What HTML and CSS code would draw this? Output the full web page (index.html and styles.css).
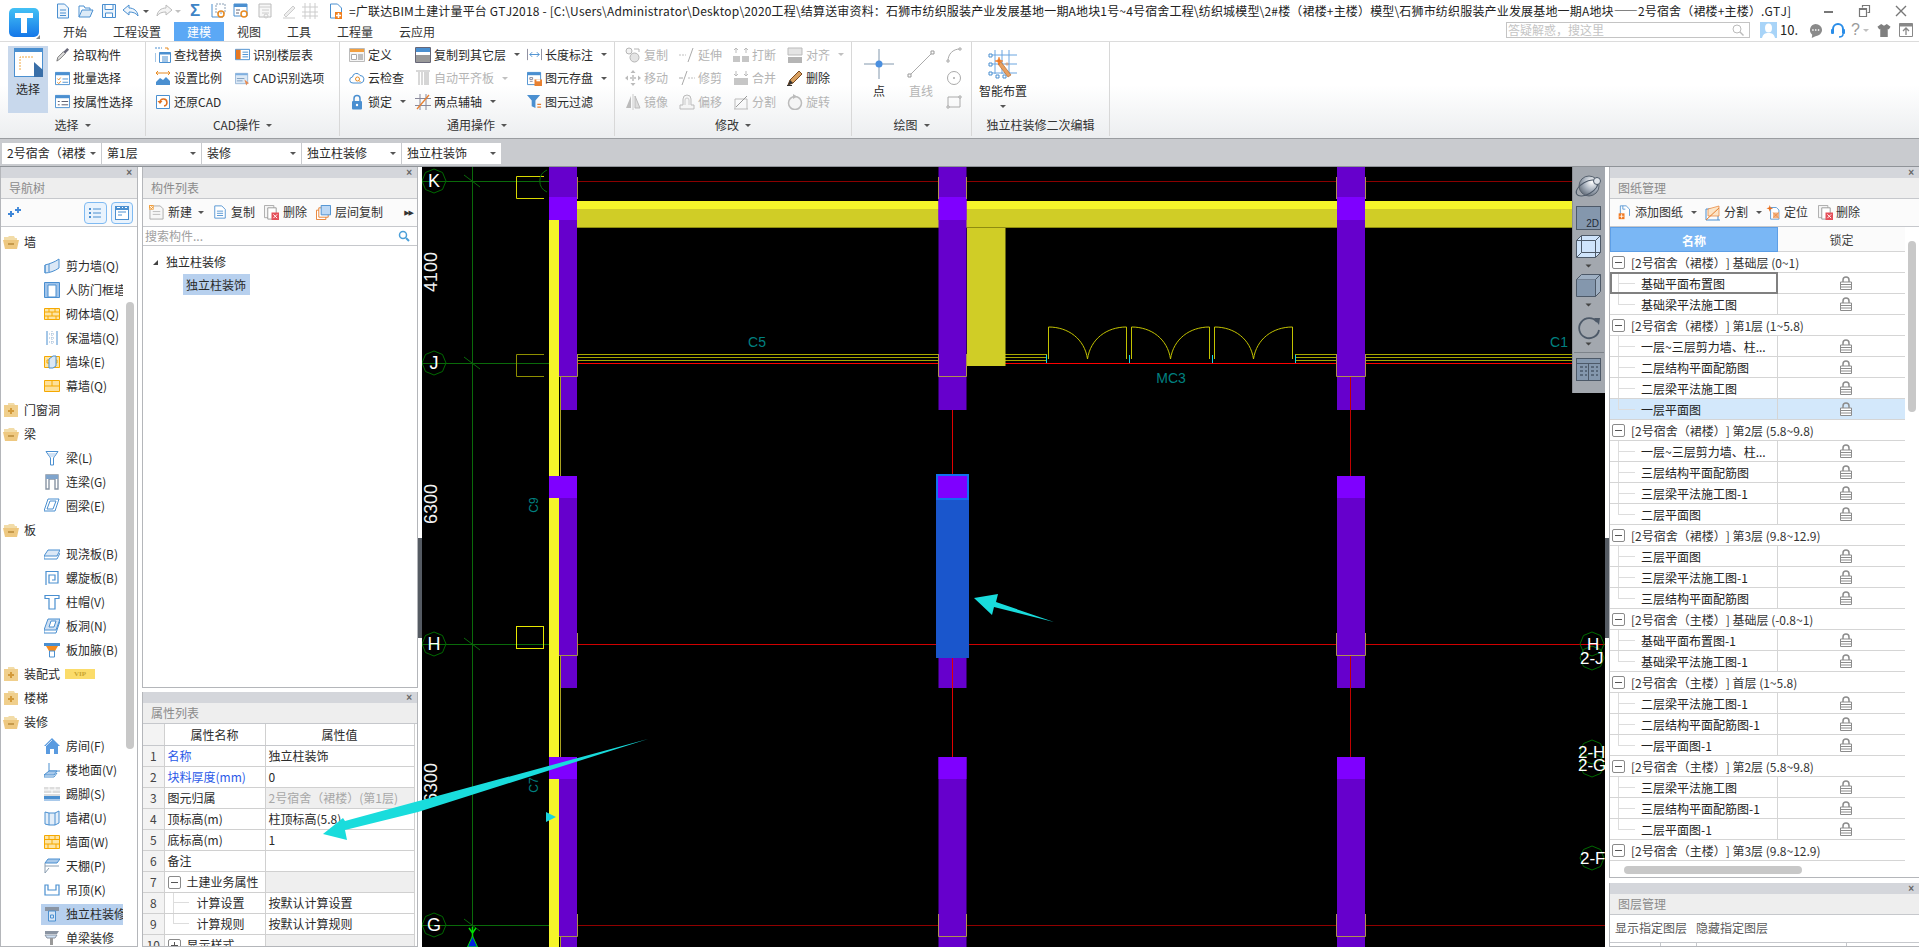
FILE: index.html
```html
<!DOCTYPE html>
<html lang="zh-CN">
<head>
<meta charset="utf-8">
<title>广联达BIM土建计量平台 GTJ2018</title>
<link rel="stylesheet" href="styles.css">
</head>
<body>
<svg class="defs" aria-hidden="true">
<defs>
<symbol id="q-new" viewBox="0 0 16 16"><path d="M2.5 1h7l4 4v10h-11z" fill="#eef5fc" stroke="#4a8fd0"/><path d="M5 7h6M5 10h6M5 12.5h6" stroke="#4a8fd0"/></symbol>
<symbol id="q-open" viewBox="0 0 16 16"><path d="M1 14V3h5l1 2h5v2" fill="none" stroke="#4a8fd0"/><path d="M1 14l3-7h11l-3 7z" fill="#dcebf8" stroke="#4a8fd0"/></symbol>
<symbol id="q-save" viewBox="0 0 16 16"><path d="M1.5 1.5h13v13h-13z" fill="#eef5fc" stroke="#4a8fd0"/><path d="M4 1.5h8v5H4zM4.5 10h7v4.5h-7z" fill="#fff" stroke="#4a8fd0"/></symbol>
<symbol id="q-undo" viewBox="0 0 18 16"><path d="M7 2L1 7l6 5V9c4 0 7 1 9 4-.5-5-4-8-9-8z" fill="#eef5fc" stroke="#4a8fd0"/></symbol>
<symbol id="q-redo" viewBox="0 0 18 16"><path d="M11 2l6 5-6 5V9c-4 0-7 1-9 4 .5-5 4-8 9-8z" fill="#f4f4f4" stroke="#bbb"/></symbol>
<symbol id="q-a" viewBox="0 0 16 16"><path d="M2 1v13h11" fill="none" stroke="#4a8fd0"/><path d="M6 1h9v9H6z" fill="#fff" stroke="#8a9fb5" stroke-dasharray="2 1"/><circle cx="11" cy="11" r="3" fill="none" stroke="#e88a20" stroke-width="1.5"/></symbol>
<symbol id="q-b" viewBox="0 0 16 16"><path d="M1 1h13v12H1z" fill="#fff" stroke="#4a8fd0"/><path d="M1 1h13v3H1z" fill="#4a8fd0"/><path d="M3 7h4M3 10h3" stroke="#667"/><circle cx="11" cy="11" r="3" fill="#fff" stroke="#e88a20" stroke-width="1.5"/></symbol>
<symbol id="q-c" viewBox="0 0 16 16"><path d="M2 1h12v13H2z" fill="#f7f7f7" stroke="#bbb"/><path d="M2 4h12M5 7h7M5 10h7" stroke="#ccc"/><circle cx="9" cy="13" r="2" fill="none" stroke="#ccc"/></symbol>
<symbol id="q-d" viewBox="0 0 16 16"><path d="M2 15h12M3 12l9-9 2 2-9 9z" fill="#eee" stroke="#ccc"/></symbol>
<symbol id="q-e" viewBox="0 0 16 16"><path d="M3 0v16M8 0v16M13 0v16M0 4h16M0 9h16M0 13h16" stroke="#ccc"/></symbol>
<symbol id="q-f" viewBox="0 0 16 16"><path d="M2.5 1h7l4 4v5h-3v5h-8z" fill="#fff" stroke="#4a8fd0"/><path d="M7 9h7v7H7z" fill="#f08020"/><path d="M10.500 10v5M8 12.500h5" stroke="#fff" stroke-width="1.500"/></symbol>

<symbol id="pick" viewBox="0 0 16 16"><path d="M2 15l1-4 6-6 2 2-6 6z" fill="#ddd" stroke="#777"/><path d="M9 5l4-4 2 2-4 4z" fill="#667"/></symbol>
<symbol id="batch" viewBox="0 0 16 16"><path d="M.5 1.500h15v13H.5z" fill="#fff" stroke="#4a8fd0"/><path d="M.5 1.500h15v3H.5z" fill="#4a8fd0"/><path d="M2.500 8l1.500 1.500 2-2.500M2.500 12l1.500 1.500 2-2.500" fill="none" stroke="#e88a20"/><path d="M8 8.500h6M8 12h6" stroke="#4a8fd0"/></symbol>
<symbol id="attr" viewBox="0 0 16 16"><path d="M.5 1.500h15v13H.5z" fill="#fff" stroke="#4a8fd0"/><path d="M.5 1.500h15v3H.5z" fill="#4a8fd0"/><path d="M3 8h2M3 11.500h2M7 8h7M7 11.500h7" stroke="#556"/></symbol>
<symbol id="find" viewBox="0 0 16 16"><path d="M0 1h7" stroke="#4a8fd0" stroke-dasharray="2 1"/><path d="M10 1h3v2" fill="none" stroke="#e88a20"/><path d="M4.500 5.500h11v10h-11z" fill="#fff" stroke="#4a8fd0"/><path d="M4.500 5.500h11v2h-11z" fill="#4a8fd0"/><path d="M7 10h6M7 12h6M7 14h6" stroke="#4a8fd0"/><path d="M0 6v9" stroke="#4a8fd0"/></symbol>
<symbol id="scale" viewBox="0 0 16 16"><path d="M1 15v-3l4-4 3 2 3-3 4 4v4z" fill="#4a8fd0"/><path d="M1 3h14M1 3l2-2M1 3l2 2M15 3l-2-2M15 3l-2 2" fill="none" stroke="#e88a20"/></symbol>
<symbol id="restore" viewBox="0 0 16 16"><path d="M1.500 1.500h13v13h-13z" fill="#fff" stroke="#4a8fd0"/><path d="M5 8a3.500 3.500 0 1 1 4 4" fill="none" stroke="#e07020" stroke-width="1.500"/><path d="M2.500 7h5l-2.500 3z" fill="#e07020"/></symbol>
<symbol id="floor" viewBox="0 0 16 16"><path d="M.5 2.500h15v11H.5z" fill="#fff" stroke="#4a8fd0"/><path d="M1 3h5v10H1z" fill="#e87820"/><path d="M8 5.500h6M8 8h6M8 10.500h6" stroke="#4a8fd0"/></symbol>
<symbol id="cadopt" viewBox="0 0 16 16"><path d="M.5 2.500h13v11H.5z" fill="#dce9f6" stroke="#9ab8d8"/><path d="M.5 2.500h13v2H.5z" fill="#7fb0e0"/><path d="M2 8h8M2 10.500h6" stroke="#7f9fc0"/><path d="M10 9l5 4-2 .5-1 2z" fill="#e88a50"/></symbol>
<symbol id="define" viewBox="0 0 16 16"><path d="M.5 1.500h15v13H.5z" fill="#f5f5f5" stroke="#bbb"/><path d="M1 2h14v3H1z" fill="#f2a040"/><path d="M2.500 7.500h5v5h-5z" fill="#fff" stroke="#aaa"/><path d="M9 8h5M9 10h5M9 12h5" stroke="#888"/></symbol>
<symbol id="cloud" viewBox="0 0 16 16"><path d="M4 13a3 3 0 0 1-.5-6 4 4 0 0 1 7.500-1.500 3.800 3.800 0 0 1 1 7.500z" fill="#fff" stroke="#4a8fd0"/><circle cx="8.500" cy="9" r="2" fill="none" stroke="#e88a20"/><path d="M10 10.500l1.500 1.500" stroke="#e88a20"/></symbol>
<symbol id="lockb" viewBox="0 0 12 16"><path d="M3 7V4.500a3 3 0 0 1 6 0V7" fill="none" stroke="#4a8fd0" stroke-width="1.500"/><rect x="1" y="7" width="10" height="8.500" rx="1" fill="#4a8fd0"/><circle cx="6" cy="11" r="1.200" fill="#fff"/></symbol>
<symbol id="copyf" viewBox="0 0 16 16"><path d="M.5 .5h15v15H.5z" fill="#fff" stroke="#667"/><path d="M1 1h14v4H1z" fill="#4a8fd0"/><path d="M1 8h14v7H1z" fill="#999"/></symbol>
<symbol id="auto" viewBox="0 0 16 16"><path d="M1 1h14M4 2v13M7 2v13" stroke="#ccc" stroke-width="1.500" fill="none"/><path d="M9 2h5v13H9z" fill="#d5d5d5"/></symbol>
<symbol id="two" viewBox="0 0 16 16"><path d="M0 4.500h16M0 11.500h16M5 0v16M11 0v16" stroke="#889"/><path d="M2 15L14 1" stroke="#e88030" stroke-width="1.300"/></symbol>
<symbol id="leng" viewBox="0 0 16 16"><path d="M.5 2v12M15.500 2v12" stroke="#889"/><path d="M3 8h10M3 8l2.500-2.500M3 8l2.500 2.500M13 8l-2.500-2.500M13 8l-2.500 2.500" fill="none" stroke="#4a8fd0"/></symbol>
<symbol id="store" viewBox="0 0 16 16"><path d="M.5 1.500h14v13H.5z" fill="#fff" stroke="#4a8fd0"/><path d="M.5 1.500h14v3H.5z" fill="#4a8fd0"/><path d="M3 7h3v2H3zM3 11h3" fill="#fff" stroke="#889"/><path d="M8 9h8v7H8z" fill="#e88030"/><path d="M10 9h4v2h-4z" fill="#fff"/></symbol>
<symbol id="filt" viewBox="0 0 16 16"><path d="M0 1h14L9 7v8l-4-2V7z" fill="#4a8fd0"/><path d="M11 11h4M11 14h4" stroke="#e88030" stroke-width="1.400"/></symbol>
<symbol id="mcopy" viewBox="0 0 16 16"><circle cx="4" cy="4" r="3" fill="#f2f2f2" stroke="#b5b5b5"/><circle cx="9.500" cy="10.500" r="4.500" fill="#e4e4e4" stroke="#b5b5b5"/><path d="M9 2h5v3" fill="none" stroke="#b5b5b5"/></symbol>
<symbol id="mext" viewBox="0 0 16 16"><path d="M0 8h7" stroke="#c0c0c0" stroke-dasharray="2 1"/><path d="M9 15l5-14" stroke="#aaa"/></symbol>
<symbol id="mbrk" viewBox="0 0 16 16"><path d="M0 9h7v6H0zM9 9h7v6H9z" fill="#c6c6c6"/><path d="M3 1v5M13 1v5M1 3l2-2 2 2M11 3l2-2 2 2" fill="none" stroke="#bbb"/></symbol>
<symbol id="malign" viewBox="0 0 16 16"><path d="M1 1h14v7H1z" fill="#e4e4e4" stroke="#bbb"/><path d="M1 10h14v6H1z" fill="#b5b5b5"/></symbol>
<symbol id="mmove" viewBox="0 0 16 16"><path d="M8 0l2.500 3h-5zM8 16l2.500-3h-5zM0 8l3-2.500v5zM16 8l-3-2.500v5z" fill="#bbb"/><path d="M5 8h6M8 5v6" stroke="#ccc" stroke-width="2"/></symbol>
<symbol id="mtrim" viewBox="0 0 16 16"><path d="M9 8h7" stroke="#c0c0c0" stroke-dasharray="2 1"/><path d="M0 8h4" stroke="#aaa"/><path d="M3 15L8 1" stroke="#aaa"/></symbol>
<symbol id="mmerge" viewBox="0 0 16 16"><path d="M1 8h14v7H1z" fill="#c6c6c6"/><path d="M3 1v5M13 1v5M1 4l2 2 2-2M11 4l2 2 2-2" fill="none" stroke="#bbb"/></symbol>
<symbol id="del" viewBox="0 0 16 16"><path d="M1 15l2-5 9-9 3 3-9 9z" fill="#d8a060" stroke="#7a4a20"/><path d="M1 15l2-5 3 3z" fill="#333"/><path d="M0 15.500h5" stroke="#333"/></symbol>
<symbol id="mmir" viewBox="0 0 16 16"><path d="M6 2v12H1z" fill="#bbb"/><path d="M10 2v12h5z" fill="#ddd" stroke="#bbb"/><path d="M8 0v16" stroke="#ccc"/></symbol>
<symbol id="moff" viewBox="0 0 16 16"><path d="M1 15v-4h3V5a4 4 0 0 1 8 0v6h3v4z" fill="#f5f5f5" stroke="#bbb"/><path d="M6 11V6a2 2 0 0 1 4 0v5" fill="none" stroke="#ccc"/></symbol>
<symbol id="msplit" viewBox="0 0 16 16"><path d="M1 15h14M2 15V5h12v10" fill="none" stroke="#bbb"/><path d="M3 13L14 2" stroke="#999"/></symbol>
<symbol id="mrot" viewBox="0 0 16 16"><circle cx="8" cy="9" r="6.500" fill="#f5f5f5" stroke="#bbb" stroke-width="1.500"/><path d="M6 0l4 2.500L6 5z" fill="#bbb"/></symbol>

<symbol id="pt" viewBox="0 0 30 30"><path d="M0 15h30M15 0v30" stroke="#8298ad"/><circle cx="15" cy="15" r="3.500" fill="#4a8fe0"/></symbol>
<symbol id="ln" viewBox="0 0 30 30"><path d="M3.500 26.500l23-23" stroke="#aaa"/><path d="M2 25h3v3H2zM25 2h3v3h-3z" fill="#fff" stroke="#999"/></symbol>
<symbol id="arc" viewBox="0 0 16 16"><path d="M2 14C2 7 7 2 14 2" fill="none" stroke="#aaa"/><path d="M1 13h2v2H1zM13 1h2v2h-2z" fill="#fff" stroke="#aaa"/></symbol>
<symbol id="cir" viewBox="0 0 16 16"><circle cx="8" cy="8" r="6.500" fill="none" stroke="#aaa"/><circle cx="8" cy="8" r="1" fill="#aaa"/></symbol>
<symbol id="rec" viewBox="0 0 16 16"><path d="M2 3h12v10H2z" fill="none" stroke="#aaa"/><path d="M1 12h2v2H1zM13 2h2v2h-2z" fill="#fff" stroke="#aaa"/></symbol>
<symbol id="smart" viewBox="0 0 30 30"><path d="M7 1v24M14 1v24M21 1v24M3 6h26M3 15h26M3 24h26" stroke="#6aa5e0"/><path d="M1 5h3v3H1zM1 14h3v3H1zM1 23h3v3H1zM8 26h3v3H8zM15 26h3v3h-3z" fill="#fff" stroke="#4a8fd0"/><path d="M10 15l3-2 10 13-3 2z" fill="#e8a060" stroke="#b06020" stroke-width=".6"/><path d="M10 11l1-3 1 3 3 1-3 1-1 3-1-3-3-1zM19 13v4M17 15h4" fill="#f07820" stroke="#f07820" stroke-width=".5"/></symbol>

<symbol id="f-min" viewBox="0 0 16 14"><path d="M1 2h4l1-1h5l1 2h2v2H1z" fill="#f2dca8"/><path d="M0 5h16l-2 9H2z" fill="#eec880"/><path d="M5 9h6" stroke="#b98b3a" stroke-width="1.500"/></symbol>
<symbol id="f-plus" viewBox="0 0 16 14"><path d="M5 0h6l1 2H5z" fill="#f2dca8"/><path d="M1 2h14v12H1z" fill="#f0cf8c"/><path d="M5 8h6M8 5v6" stroke="#d39a3a" stroke-width="2"/></symbol>
<symbol id="n-shear" viewBox="0 0 16 16"><path d="M1 7c4-1 10-3 14-6v9c-4 3-10 5-14 5z" fill="#dbe8f6" stroke="#4a8fd0"/><path d="M1 7v8M5 6v8" stroke="#4a8fd0" fill="none"/></symbol>
<symbol id="n-door" viewBox="0 0 16 16"><path d="M.5 .5h15v15H.5z" fill="#9fc3ea" stroke="#4a8fd0"/><path d="M4 3h8v12H4z" fill="#fff" stroke="#4a8fd0"/></symbol>
<symbol id="n-brick" viewBox="0 0 16 16"><path d="M.5 2.500h15v11H.5z" fill="#fde5a5" stroke="#f5a800"/><path d="M.5 6h15M.5 10h15M5 2.500V6M11 2.500V6M8 6v4M4 10v3.500M12 10v3.500" stroke="#f5a800"/></symbol>
<symbol id="n-ins" viewBox="0 0 16 16"><path d="M3 1v14M13 1v14" stroke="#4a8fd0"/><path d="M8 1v14M5 4h6M5 8h6M5 12h6" stroke="#99b6d5" stroke-dasharray="1 1"/></symbol>
<symbol id="n-pier" viewBox="0 0 16 16"><path d="M.5 2.500h15v11H.5z" fill="#fde5a5" stroke="#f5a800"/><path d="M3 6h3v3H3zM10 6h3v3h-3z" fill="none" stroke="#f5a800"/><path d="M5 5l4-3h3v10l-3 2H5z" fill="#dbe8f6" stroke="#4a8fd0"/></symbol>
<symbol id="n-cw" viewBox="0 0 16 16"><path d="M.5 2.500h15v11H.5z" fill="#fde09a" stroke="#f5a800"/><path d="M8 2.500v5.500M.5 8h15" stroke="#f5a800"/></symbol>
<symbol id="n-beam" viewBox="0 0 16 16"><path d="M2 1.500h12L9.500 8v7h-3V8z" fill="#fff" stroke="#4a8fd0"/><path d="M4 4h8M5 6h6" stroke="#9fc3ea"/></symbol>
<symbol id="n-link" viewBox="0 0 16 16"><path d="M2 1h12v14h-3V5H5v10H2z" fill="#fff" stroke="#8894a3" stroke-width="1.400"/><path d="M2 1h12v4H2z" fill="#7fa4cc"/></symbol>
<symbol id="n-ring" viewBox="0 0 16 16"><path d="M4 1h11l-4 12H0z" fill="#fff" stroke="#4a8fd0"/><path d="M6 3h6l-3 8H3z" fill="none" stroke="#4a8fd0"/></symbol>
<symbol id="n-slab" viewBox="0 0 16 16"><path d="M4 4h12l-3 6H0z" fill="#dbe8f6" stroke="#4a8fd0"/><path d="M0 10v3h13l3-6" fill="none" stroke="#4a8fd0"/></symbol>
<symbol id="n-spiral" viewBox="0 0 16 16"><path d="M2 15V1.500h12V13H5V5h6v5H8" fill="none" stroke="#4a8fd0" stroke-width="1.200"/></symbol>
<symbol id="n-cap" viewBox="0 0 16 16"><path d="M1 1.500h14v3h-4V15H5V4.500H1z" fill="#fff" stroke="#4a8fd0" stroke-width="1.200"/></symbol>
<symbol id="n-hole" viewBox="0 0 16 16"><path d="M4 1h12l-4 11H0z" fill="#cfe0f3" stroke="#4a8fd0"/><path d="M7 3h5l-2 6H5z" fill="#fff" stroke="#4a8fd0"/><path d="M0 12v3h12l4-12" fill="none" stroke="#4a8fd0"/></symbol>
<symbol id="n-hau" viewBox="0 0 16 16"><path d="M0 1h16v3H0z" fill="#4a8fd0"/><path d="M2 4h12l-3 5H5z" fill="#f58a1e"/><path d="M5.500 9h5v6h-5z" fill="#fff" stroke="#4a8fd0"/></symbol>
<symbol id="n-room" viewBox="0 0 16 16"><path d="M8 0L0 8h2v8h4v-5h4v5h4V8h2z" fill="#5a9be0"/><path d="M8 2L2 8" stroke="#cfe0f3"/></symbol>
<symbol id="n-floor" viewBox="0 0 16 16"><path d="M5 1v8h11" fill="none" stroke="#4a8fd0"/><path d="M5 9h8l-3 4H0z" fill="#a9c9ea" stroke="#4a8fd0"/><path d="M0 13v2h10l3-4" fill="none" stroke="#4a8fd0"/></symbol>
<symbol id="n-skirt" viewBox="0 0 16 16"><path d="M0 1h16v10H0z" fill="#ddd"/><path d="M0 4h16M0 7.500h16M5 1v3M11 1v3M8 4v3.500" stroke="#fff"/><path d="M0 10h16v3H0z" fill="#4a8fd0"/><path d="M0 13h16v2H0z" fill="#a9c9ea"/></symbol>
<symbol id="n-dado" viewBox="0 0 16 16"><path d="M1 2l4 1h6l4-2v12l-4 2H5l-4-1z" fill="#e3eef9" stroke="#4a8fd0"/><path d="M5 3v12M11 3v12" stroke="#4a8fd0"/></symbol>
<symbol id="n-wf" viewBox="0 0 16 16"><path d="M.5 1.500h15v13H.5z" fill="#fde5a5" stroke="#f5a800"/><path d="M.5 5.500h15M.5 10h15M5 1.500v4M11 1.500v4M8 5.500V10M4 10v4.500M12 10v4.500" stroke="#f5a800"/></symbol>
<symbol id="n-ceil" viewBox="0 0 16 16"><path d="M4 1h12l-3 4H1z" fill="#a9c9ea" stroke="#4a8fd0"/><path d="M1 8h14M1 5v10" fill="none" stroke="#8a9db0"/><path d="M1 15l4-5" stroke="#8a9db0"/></symbol>
<symbol id="n-hang" viewBox="0 0 16 16"><path d="M1 3v10h14V3h-3v5H4V3z" fill="#fff" stroke="#4a8fd0" stroke-width="1.200"/></symbol>
<symbol id="n-col" viewBox="0 0 16 16"><path d="M1 1h14v4H1z" fill="#8a94a2"/><path d="M4.500 5h7v10h-7z" fill="#d6e5f5" stroke="#4a8fd0"/><path d="M6.500 9h3v3h-3z" fill="none" stroke="#4a8fd0"/></symbol>
<symbol id="n-single" viewBox="0 0 16 16"><path d="M1 1h14l-2 3H1z" fill="#8a94a2"/><path d="M1 5h12l-2 3H3z" fill="#cfe0f3" stroke="#8a94a2"/><path d="M6 8h3v7H6z" fill="#999"/></symbol>

<symbol id="t-spark" viewBox="0 0 13 11"><path d="M0 7h6M3 4v6" stroke="#3d86d8" stroke-width="2"/><path d="M7 3h6M10 0v6" stroke="#3d86d8" stroke-width="1.800"/></symbol>
<symbol id="t-list" viewBox="0 0 14 14"><path d="M1 2h2v2H1zM1 6h2v2H1zM1 10h2v2H1z" fill="#4a8fd0"/><path d="M5 3h8M5 7h8M5 11h8" stroke="#4a8fd0"/></symbol>
<symbol id="t-win" viewBox="0 0 14 14"><path d="M0 0h14v14H0z" fill="#4a8fd0"/><path d="M1 4h12v9H1z" fill="#fff"/><path d="M2 1.500h3M7 1.500h1M10 1.500h2" stroke="#fff"/><path d="M3 6h8M3 9h4" stroke="#4a8fd0"/></symbol>
<symbol id="t-newc" viewBox="0 0 16 16"><path d="M3 1h9l3 3v11H1V5" fill="#f7f7f7" stroke="#aaa"/><path d="M4 7h8M4 10h8" stroke="#bbb"/><path d="M0 0h5v5H0z" fill="#f0a040"/><path d="M1 1l3 3M4 1L1 4" stroke="#fff"/></symbol>
<symbol id="t-dup" viewBox="0 0 14 16"><path d="M1 1h8l4 4v10H1z" fill="#fff" stroke="#4a8fd0"/><path d="M3.500 7h7M3.500 9.500h7M3.500 12h7" stroke="#4a8fd0"/></symbol>
<symbol id="t-del" viewBox="0 0 16 16"><path d="M.5 .5h10v13H.5z" fill="#f5f5f5" stroke="#aaa"/><path d="M4 3h9v12H4z" fill="#fff" stroke="#999"/><path d="M8 8h8v8H8z" fill="#e5505a"/><path d="M10 10l4 4M14 10l-4 4" stroke="#fff"/></symbol>
<symbol id="t-lay" viewBox="0 0 16 16"><path d="M.5 5.500h10v10H.5z" fill="#fff" stroke="#e88030"/><path d="M3 3h10v10H3z" fill="#fff" stroke="#e88030"/><path d="M5.500 .5h10v10h-10z" fill="#bcd8f5" stroke="#4a8fd0"/></symbol>
<symbol id="t-add" viewBox="0 0 14 18"><path d="M2 1h7l4 4v8" fill="#fff" stroke="#4a8fd0"/><path d="M2 1v10" stroke="#4a8fd0"/><path d="M5 1v4h3" fill="none" stroke="#4a8fd0"/><path d="M0 10h7v7H0z" fill="#f07820"/><path d="M3.500 11v5M1 13.500h5" stroke="#fff"/></symbol>
<symbol id="t-sp" viewBox="0 0 16 16"><path d="M1 15h14M1 15V4h12v11" fill="none" stroke="#4a8fd0"/><path d="M3 4l11-3v10H3z" fill="#fbe5c8" stroke="#e88030" stroke-width=".7"/><path d="M1 15L14 3" stroke="#e88030"/></symbol>
<symbol id="t-loc" viewBox="0 0 15 18"><path d="M4 3h7l3 3v11H4z" fill="#fff" stroke="#4a8fd0"/><path d="M7 9h7v7H7z" fill="#f3b283"/><path d="M7 15l7-6M7 9l7 7" stroke="#e88030" stroke-width=".7"/><path d="M3 0l1 3 3 1-3 1-1 3-1-3-3-1 3-1z" fill="#e87020"/></symbol>
<symbol id="lock" viewBox="0 0 12 14"><path d="M3 6V4a3 3 0 0 1 6 0v2" fill="none" stroke="#8c8c8c" stroke-width="1.500"/><path d="M.5 6h11v7.500H.5z" fill="#fff" stroke="#8c8c8c"/><path d="M1 8.500h10M1 11h10" stroke="#8c8c8c"/></symbol>
<g id="bub"><polygon points="0,-12 8.500,-8.500 12,0 8.500,8.500 0,12 -8.500,8.500 -12,0 -8.500,-8.500" fill="none" stroke="#006a00"/></g>
<g id="door"><path d="M0 32V0C20 0 36 12 39 32C42 12 58 0 78 0V32" fill="none" stroke="#c2c200"/></g>
<radialGradient id="ball" cx=".65" cy=".3" r=".8"><stop offset="0" stop-color="#fff"/><stop offset=".5" stop-color="#aab3bf"/><stop offset="1" stop-color="#5a6470"/></radialGradient>
<linearGradient id="logoG" x1="0" y1="0" x2="0" y2="1"><stop offset="0" stop-color="#43c1f5"/><stop offset="1" stop-color="#1577e8"/></linearGradient>
</defs>
</svg>

<div class="app">
  <header class="head">
    <div class="logo-cell">
      <svg class="logo" viewBox="0 0 30 29"><rect width="30" height="29" rx="5" fill="url(#logoG)"/><path d="M6 5h18v5h-6v15h-6V10H6z" fill="#fff"/></svg>
      <span class="logo-corner"></span>
    </div>
    <div class="head-main">
      <div class="titlebar">
        <div class="qat">
          <svg class="i16"><use href="#q-new"/></svg>
          <svg class="i16"><use href="#q-open"/></svg>
          <svg class="i16"><use href="#q-save"/></svg>
          <svg class="i18"><use href="#q-undo"/></svg>
          <span class="caret"></span>
          <svg class="i18"><use href="#q-redo"/></svg>
          <span class="caret caret-off"></span>
          <span class="sigma">Σ</span>
          <svg class="i16"><use href="#q-a"/></svg>
          <svg class="i16"><use href="#q-b"/></svg>
          <svg class="i16"><use href="#q-c"/></svg>
          <svg class="i16"><use href="#q-d"/></svg>
          <svg class="i16"><use href="#q-e"/></svg>
          <svg class="i16"><use href="#q-f"/></svg>
        </div>
        <div class="doc-title">=广联达BIM土建计量平台 GTJ2018 - [C:\Users\Administrator\Desktop\2020工程\结算送审资料：石狮市纺织服装产业发展基地一期A地块1号~4号宿舍工程\纺织城模型\2#楼（裙楼+主楼）模型\石狮市纺织服装产业发展基地一期A地块——2号宿舍（裙楼+主楼）.GTJ]</div>
        <div class="winbtns">
          <svg class="wb" viewBox="0 0 14 14"><path d="M2 8h9" stroke="#777" stroke-width="2"/></svg>
          <svg class="wb" viewBox="0 0 14 14"><path d="M4.500 3.500V1.500h7v7h-2M1.500 4.500h7v8h-7z" fill="none" stroke="#777" stroke-width="1.200"/><path d="M1.500 5.500h7" stroke="#777"/></svg>
          <svg class="wb wb-last" viewBox="0 0 14 14"><path d="M2 2l10 10M12 2L2 12" stroke="#777" stroke-width="1.400"/></svg>
        </div>
      </div>
      <div class="tabsbar">
        <nav class="tabs">
          <span class="tab">开始</span><span class="tab">工程设置</span><span class="tab tab-on">建模</span><span class="tab">视图</span><span class="tab">工具</span><span class="tab">工程量</span><span class="tab">云应用</span>
        </nav>
        <div class="tools-right">
          <div class="search"><span>答疑解惑，搜这里</span><svg class="i12" viewBox="0 0 12 12"><circle cx="5" cy="5" r="4" fill="none" stroke="#bbb"/><path d="M8 8l3.500 3.500" stroke="#bbb" stroke-width="1.400"/></svg></div>
          <svg class="avatar" viewBox="0 0 17 16"><rect width="17" height="16" fill="#a8d4f8"/><ellipse cx="8.500" cy="6" rx="3.500" ry="4.500" fill="#fff"/><path d="M2 16c1-4 3-5 6.500-5s5.500 1 6.500 5z" fill="#fff"/></svg>
          <span class="user">10.</span>
          <svg class="ic-chat" viewBox="0 0 16 16"><path d="M8 1a7 6.500 0 0 1 0 13l-4 2 .5-3.500A6.500 6.500 0 0 1 8 1z" fill="#8a8a8a"/><path d="M4.500 7.500h1.500M7.500 7.500H9M10.500 7.500H12" stroke="#fff" stroke-width="1.500"/></svg>
          <svg class="ic-head" viewBox="0 0 14 16"><path d="M2 9V7a5 5 0 0 1 10 0v2" fill="none" stroke="#2a8de8" stroke-width="2"/><rect y="7" width="3" height="5" rx="1" fill="#2a8de8"/><rect x="11" y="7" width="3" height="5" rx="1" fill="#2a8de8"/><path d="M12 12c0 2-2 3-4 3" fill="none" stroke="#2a8de8" stroke-width="1.500"/></svg>
          <span class="help">?</span><span class="caret caret-off"></span>
          <svg class="ic-shirt" viewBox="0 0 14 16"><path d="M4 1L0 4l2 3 1-1v9h8V6l1 1 2-3-4-3-3 2z" fill="#7f7f7f"/></svg>
          <svg class="ic-up" viewBox="0 0 14 14"><path d="M.5 .5h13v13H.5z" fill="#fff" stroke="#888"/><path d="M.5 .5h13v3H.5z" fill="#888"/><path d="M7 12V6M4 8l3-3 3 3" fill="none" stroke="#888" stroke-width="1.300"/></svg>
        </div>
      </div>
    </div>
  </header>

  <section class="ribbon">
    <div class="rg rg-sel">
      <div class="rg-body">
        <div class="bigsel">
          <svg class="bigsel-i" viewBox="0 0 29 29"><rect x=".5" y=".5" width="28" height="28" fill="#fff" stroke="#4a8fd0"/><rect width="29" height="4" fill="#4a8fd0"/><path d="M6 22V9h14" fill="none" stroke="#f2a840" stroke-dasharray="2 1"/><path d="M20 14l9 8v7h-9z" fill="#3a6fa8"/></svg>
          <span>选择</span>
        </div>
        <div class="rcol">
          <div class="ri"><svg class="i15"><use href="#pick"/></svg>拾取构件</div>
          <div class="ri"><svg class="i15"><use href="#batch"/></svg>批量选择</div>
          <div class="ri"><svg class="i15"><use href="#attr"/></svg>按属性选择</div>
        </div>
      </div>
      <div class="rg-label">选择<span class="caret"></span></div>
    </div>
    <div class="rg rg-cad">
      <div class="rg-body">
        <div class="rcol col80">
          <div class="ri"><svg class="i16"><use href="#find"/></svg>查找替换</div>
          <div class="ri"><svg class="i16"><use href="#scale"/></svg>设置比例</div>
          <div class="ri"><svg class="i16"><use href="#restore"/></svg>还原CAD</div>
        </div>
        <div class="rcol">
          <div class="ri"><svg class="i15"><use href="#floor"/></svg>识别楼层表</div>
          <div class="ri"><svg class="i15"><use href="#cadopt"/></svg>CAD识别选项</div>
        </div>
      </div>
      <div class="rg-label">CAD操作<span class="caret"></span></div>
    </div>
    <div class="rg rg-gen">
      <div class="rg-body">
        <div class="rcol col66">
          <div class="ri"><svg class="i16"><use href="#define"/></svg>定义</div>
          <div class="ri"><svg class="i16"><use href="#cloud"/></svg>云检查</div>
          <div class="ri"><svg class="i16"><use href="#lockb"/></svg>锁定<span class="caret"></span></div>
        </div>
        <div class="rcol col112">
          <div class="ri"><svg class="i16"><use href="#copyf"/></svg>复制到其它层<span class="caret"></span></div>
          <div class="ri off"><svg class="i16"><use href="#auto"/></svg>自动平齐板<span class="caret caret-off"></span></div>
          <div class="ri"><svg class="i16"><use href="#two"/></svg>两点辅轴<span class="caret"></span></div>
        </div>
        <div class="rcol">
          <div class="ri"><svg class="i15"><use href="#leng"/></svg>长度标注<span class="caret"></span></div>
          <div class="ri"><svg class="i15"><use href="#store"/></svg>图元存盘<span class="caret"></span></div>
          <div class="ri"><svg class="i15"><use href="#filt"/></svg>图元过滤</div>
        </div>
      </div>
      <div class="rg-label">通用操作<span class="caret"></span></div>
    </div>
    <div class="rg rg-mod">
      <div class="rg-body">
        <div class="rcol col54">
          <div class="ri off"><svg class="i16"><use href="#mcopy"/></svg>复制</div>
          <div class="ri off"><svg class="i16"><use href="#mmove"/></svg>移动</div>
          <div class="ri off"><svg class="i16"><use href="#mmir"/></svg>镜像</div>
        </div>
        <div class="rcol col54">
          <div class="ri off"><svg class="i16"><use href="#mext"/></svg>延伸</div>
          <div class="ri off"><svg class="i16"><use href="#mtrim"/></svg>修剪</div>
          <div class="ri off"><svg class="i16"><use href="#moff"/></svg>偏移</div>
        </div>
        <div class="rcol col54">
          <div class="ri off"><svg class="i16"><use href="#mbrk"/></svg>打断</div>
          <div class="ri off"><svg class="i16"><use href="#mmerge"/></svg>合并</div>
          <div class="ri off"><svg class="i16"><use href="#msplit"/></svg>分割</div>
        </div>
        <div class="rcol">
          <div class="ri off"><svg class="i16"><use href="#malign"/></svg>对齐<span class="caret caret-off"></span></div>
          <div class="ri"><svg class="i16"><use href="#del"/></svg>删除</div>
          <div class="ri off"><svg class="i16"><use href="#mrot"/></svg>旋转</div>
        </div>
      </div>
      <div class="rg-label">修改<span class="caret"></span></div>
    </div>
    <div class="rg rg-draw">
      <div class="rg-body">
        <div class="bigbtn"><svg class="i30"><use href="#pt"/></svg><span>点</span></div>
        <div class="bigbtn off"><svg class="i30"><use href="#ln"/></svg><span>直线</span></div>
        <div class="rcol">
          <div class="ri"><svg class="i16"><use href="#arc"/></svg></div>
          <div class="ri"><svg class="i16"><use href="#cir"/></svg></div>
          <div class="ri"><svg class="i16"><use href="#rec"/></svg></div>
        </div>
      </div>
      <div class="rg-label">绘图<span class="caret"></span></div>
    </div>
    <div class="rg rg-smart">
      <div class="rg-body">
        <div class="bigbtn bigbtn-wide"><svg class="i30"><use href="#smart"/></svg><span>智能布置</span><span class="caret caret-down"></span></div>
      </div>
      <div class="rg-label">独立柱装修二次编辑</div>
    </div>
  </section>

  <section class="selbar">
    <div class="sel">2号宿舍（裙楼<span class="caret"></span></div>
    <div class="sel">第1层<span class="caret"></span></div>
    <div class="sel">装修<span class="caret"></span></div>
    <div class="sel">独立柱装修<span class="caret"></span></div>
    <div class="sel">独立柱装饰<span class="caret"></span></div>
  </section>

  <main class="work">
    <aside class="nav panel">
      <div class="strip"><span class="x">×</span></div>
      <div class="ptitle">导航树</div>
      <div class="ptool nav-tool">
        <svg class="i-spark"><use href="#t-spark"/></svg>
        <span class="toggle"><svg class="i14"><use href="#t-list"/></svg></span>
        <span class="toggle"><svg class="i14"><use href="#t-win"/></svg></span>
      </div>
      <div class="nav-body">
        <div class="tree">
          <div class="tg"><svg class="i-f"><use href="#f-min"/></svg>墙</div>
          <div class="ti"><svg class="i16"><use href="#n-shear"/></svg>剪力墙(Q)</div>
          <div class="ti"><svg class="i16"><use href="#n-door"/></svg>人防门框墙(R)</div>
          <div class="ti"><svg class="i16"><use href="#n-brick"/></svg>砌体墙(Q)</div>
          <div class="ti"><svg class="i16"><use href="#n-ins"/></svg>保温墙(Q)</div>
          <div class="ti"><svg class="i16"><use href="#n-pier"/></svg>墙垛(E)</div>
          <div class="ti"><svg class="i16"><use href="#n-cw"/></svg>幕墙(Q)</div>
          <div class="tg"><svg class="i-f"><use href="#f-plus"/></svg>门窗洞</div>
          <div class="tg"><svg class="i-f"><use href="#f-min"/></svg>梁</div>
          <div class="ti"><svg class="i16"><use href="#n-beam"/></svg>梁(L)</div>
          <div class="ti"><svg class="i16"><use href="#n-link"/></svg>连梁(G)</div>
          <div class="ti"><svg class="i16"><use href="#n-ring"/></svg>圈梁(E)</div>
          <div class="tg"><svg class="i-f"><use href="#f-min"/></svg>板</div>
          <div class="ti"><svg class="i16"><use href="#n-slab"/></svg>现浇板(B)</div>
          <div class="ti"><svg class="i16"><use href="#n-spiral"/></svg>螺旋板(B)</div>
          <div class="ti"><svg class="i16"><use href="#n-cap"/></svg>柱帽(V)</div>
          <div class="ti"><svg class="i16"><use href="#n-hole"/></svg>板洞(N)</div>
          <div class="ti"><svg class="i16"><use href="#n-hau"/></svg>板加腋(B)</div>
          <div class="tg"><svg class="i-f"><use href="#f-plus"/></svg>装配式<span class="vip">VIP</span></div>
          <div class="tg"><svg class="i-f"><use href="#f-plus"/></svg>楼梯</div>
          <div class="tg"><svg class="i-f"><use href="#f-min"/></svg>装修</div>
          <div class="ti"><svg class="i16"><use href="#n-room"/></svg>房间(F)</div>
          <div class="ti"><svg class="i16"><use href="#n-floor"/></svg>楼地面(V)</div>
          <div class="ti"><svg class="i16"><use href="#n-skirt"/></svg>踢脚(S)</div>
          <div class="ti"><svg class="i16"><use href="#n-dado"/></svg>墙裙(U)</div>
          <div class="ti"><svg class="i16"><use href="#n-wf"/></svg>墙面(W)</div>
          <div class="ti"><svg class="i16"><use href="#n-ceil"/></svg>天棚(P)</div>
          <div class="ti"><svg class="i16"><use href="#n-hang"/></svg>吊顶(K)</div>
          <div class="ti ti-on"><svg class="i16"><use href="#n-col"/></svg>独立柱装修(Z)</div>
          <div class="ti"><svg class="i16"><use href="#n-single"/></svg>单梁装修</div>
        </div>
        <div class="vtrack"><div class="vthumb"></div></div>
      </div>
    </aside>

    <div class="mid">
      <section class="panel list-panel">
        <div class="strip"><span class="x">×</span></div>
        <div class="ptitle">构件列表</div>
        <div class="ptool tb">
          <span class="tbi"><svg class="i15"><use href="#t-newc"/></svg>新建<span class="caret"></span></span>
          <span class="tbi"><svg class="i14"><use href="#t-dup"/></svg>复制</span>
          <span class="tbi"><svg class="i15"><use href="#t-del"/></svg>删除</span>
          <span class="tbi"><svg class="i15"><use href="#t-lay"/></svg>层间复制</span>
          <span class="more">▶▶</span>
        </div>
        <div class="csearch"><span>搜索构件...</span><svg class="i12" viewBox="0 0 12 12"><circle cx="5" cy="5" r="3.500" fill="none" stroke="#4a9fd8" stroke-width="1.500"/><path d="M8 8l3 3" stroke="#4a9fd8" stroke-width="2"/></svg></div>
        <div class="clist">
          <div class="cgroup"><span class="tri"></span>独立柱装修</div>
          <div class="citem">独立柱装饰</div>
        </div>
      </section>
      <section class="panel prop-panel">
        <div class="strip"><span class="x">×</span></div>
        <div class="ptitle">属性列表</div>
        <table class="ptable">
          <colgroup><col class="c-n"><col class="c-k"><col class="c-v"></colgroup>
          <thead><tr><th></th><th>属性名称</th><th>属性值</th></tr></thead>
          <tbody>
            <tr><td class="n">1</td><td class="blue">名称</td><td>独立柱装饰</td></tr>
            <tr><td class="n">2</td><td class="blue">块料厚度(mm)</td><td>0</td></tr>
            <tr><td class="n">3</td><td>图元归属</td><td class="gray">2号宿舍（裙楼）(第1层)</td></tr>
            <tr><td class="n">4</td><td>顶标高(m)</td><td>柱顶标高(5.8)</td></tr>
            <tr><td class="n">5</td><td>底标高(m)</td><td>1</td></tr>
            <tr><td class="n">6</td><td>备注</td><td></td></tr>
            <tr><td class="n">7</td><td class="tg-cell"><span class="box minus"></span>土建业务属性</td><td class="shade"></td></tr>
            <tr><td class="n">8</td><td class="sub">计算设置</td><td>按默认计算设置</td></tr>
            <tr><td class="n">9</td><td class="sub sub-last">计算规则</td><td>按默认计算规则</td></tr>
            <tr><td class="n">10</td><td class="tg-cell"><span class="box plus"></span>显示样式</td><td class="shade"></td></tr>
          </tbody>
        </table>
      </section>
    </div>

    <div class="handle"></div>

    <div class="canvas">
      <svg class="cad" viewBox="422 167 1183 780">
        <rect x="422" y="166" width="1183" height="781" fill="#000"/>
        <!-- axis lines -->
        <path d="M422 181.500H549M422 363.500H549M422 644.500H549M422 925.500H549M472.500 166V947" stroke="#0a6a0a" fill="none"/>
        <path d="M464 175l16 12M464 357l16 12M464 638l16 12M464 919l16 12" stroke="#0a6a0a"/>
        <path d="M577 181.500H1572" stroke="#8b0000"/>
        <path d="M577 644.500H1605" stroke="#d00000"/>
        <path d="M577 925.500H1605" stroke="#900000"/>
        <!-- bubbles -->
        <use href="#bub" x="434" y="181"/><use href="#bub" x="434" y="363"/><use href="#bub" x="434" y="644"/><use href="#bub" x="434" y="925"/>
        <text class="ax" x="434" y="187">K</text><text class="ax" x="434" y="369">J</text><text class="ax" x="434" y="650">H</text><text class="ax" x="434" y="931">G</text>
        <use href="#bub" x="1592" y="644"/><use href="#bub" x="1592" y="658"/><use href="#bub" x="1592" y="752"/><use href="#bub" x="1592" y="765"/><use href="#bub" x="1592" y="858"/>
        <text class="axs" x="1587" y="650">H</text><text class="axs" x="1580" y="664">2-J</text><text class="axs" x="1578" y="758">2-H</text><text class="axs" x="1578" y="771">2-G</text><text class="axs" x="1580" y="864">2-F</text>
        <!-- dimensions -->
        <text class="dim" transform="translate(437 272) rotate(-90)">4100</text>
        <text class="dim" transform="translate(437 504) rotate(-90)">6300</text>
        <text class="dim" transform="translate(437 783) rotate(-90)">6300</text>
        <!-- side squares -->
        <path d="M544 176.500H516.500V198.500H544" fill="none" stroke="#d8d800"/>
        <path d="M544 354.500H516.500V376.500H544" fill="none" stroke="#8f8f00"/>
        <rect x="516.500" y="626.500" width="27" height="22" fill="none" stroke="#e8e800"/>
        <path d="M547 170a12 12 0 0 0 0 22" fill="none" stroke="#0a6a0a"/>
        <!-- wall lines -->
        <path d="M577 354.500H938M577 357.500H938M577 360.500H938M966 354.500H1047M966 357.500H1047M966 360.500H1047M1295 354.500H1337M1295 357.500H1337M1295 360.500H1337M1365 354.500H1572M1365 357.500H1572M1365 360.500H1572" stroke="#a8a800"/>
        <path d="M577 363.500H1572" stroke="#ff0000"/>
        <use href="#door" x="1048.500" y="327"/><use href="#door" x="1131.500" y="327"/><use href="#door" x="1214.500" y="327"/>
        <path d="M1046.500 355v8M1129.500 355v8M1212.500 355v8M1295.500 355v8" stroke="#18d8e8"/>
        <text class="cd" x="757" y="347">C5</text><text class="cd" x="1171" y="383">MC3</text><text class="cd" x="1559" y="347">C1</text>
        <text class="cd cd-s" transform="translate(538 505) rotate(-90)">C9</text>
        <text class="cd cd-s" transform="translate(538 785) rotate(-90)">C7</text>
        <!-- beam -->
        <rect x="577" y="201" width="995" height="8" fill="#f5f52a"/>
        <rect x="577" y="209" width="995" height="19" fill="#d0cd26"/>
        <rect x="577" y="227" width="995" height="1" fill="#8e8c10"/>
        <rect x="967" y="228" width="38.500" height="138" fill="#d0cd26"/>
        <!-- vertical red -->
        <path d="M952.500 377V476M952.500 656V757M952.500 937V947" stroke="#e00000"/>
        <path d="M1350.500 377V476M1350.500 656V757M1350.500 937V947" stroke="#c00000"/>
        <!-- left wall -->
        <rect x="549" y="220" width="10" height="256" fill="#f5f52a"/>
        <rect x="549" y="498" width="10" height="259" fill="#f5f52a"/>
        <rect x="549" y="779" width="10" height="168" fill="#f5f52a"/>
        <path d="M560.500 377V476M560.500 656V757M560.500 937V947" stroke="#a8a020"/>
        <!-- columns -->
        <rect x="559" y="166" width="18" height="211" fill="#6600cc"/><rect x="549" y="166" width="28" height="31" fill="#6600cc"/><rect x="549" y="197" width="28" height="23" fill="#7f00ff"/>
        <rect x="561" y="377" width="16" height="33" fill="#6600cc"/>
        <rect x="549" y="476" width="28" height="22" fill="#7f00ff"/><rect x="559" y="498" width="18" height="158" fill="#6600cc"/><rect x="561" y="656" width="16" height="32" fill="#6600cc"/>
        <rect x="549" y="757" width="28" height="22" fill="#7f00ff"/><rect x="559" y="779" width="18" height="158" fill="#6600cc"/><rect x="561" y="937" width="16" height="10" fill="#6600cc"/>
        <path d="M559 376.500H577.500V354M559 655.500H577.500V633M559 936.500H577.500V914M577.500 177V199" fill="none" stroke="#a8904a"/>

        <rect x="938.500" y="166" width="28" height="244" fill="#6600cc"/><rect x="938.500" y="197" width="28" height="23" fill="#7f00ff"/>
        <rect x="936" y="474" width="33" height="184" fill="#1a56cc"/>
        <rect x="937" y="475" width="31" height="24" fill="#7f00ff" stroke="#1070f0" stroke-width="2"/>
        <rect x="938.500" y="658" width="28" height="30" fill="#6600cc"/>
        <rect x="938.500" y="757" width="28" height="190" fill="#6600cc"/><rect x="938.500" y="757" width="28" height="22" fill="#7f00ff"/>
        <path d="M938.500 177V199M966.500 177V199M938.500 354V376.500H966.500V354M938.500 914V936.500H966.500V914" fill="none" stroke="#b09050"/>
        <path d="M952.500 658V688" stroke="#e00000"/>

        <rect x="1337" y="166" width="28" height="244" fill="#6600cc"/><rect x="1337" y="197" width="28" height="23" fill="#7f00ff"/>
        <rect x="1337" y="476" width="28" height="212" fill="#6600cc"/><rect x="1337" y="476" width="28" height="22" fill="#7f00ff"/>
        <rect x="1337" y="757" width="28" height="190" fill="#6600cc"/><rect x="1337" y="757" width="28" height="22" fill="#7f00ff"/>
        <path d="M1336.500 177V199M1365.500 177V199M1336.500 354V376.500H1365.500V354M1336.500 633V655.500H1365.500V633M1336.500 914V936.500H1365.500V914" fill="none" stroke="#b09050"/>
        <path d="M1350.500 377V410M1350.500 656V688" stroke="#c00000"/>

        <!-- origin marker -->
        <path d="M472.500 927v10" stroke="#00e000" stroke-width="1.500"/><path d="M469 928l3.500 5 3.500-5" fill="none" stroke="#00e000" stroke-width="1.500"/><path d="M472.500 936l-5 11h10z" fill="#0020e0" stroke="#00e000"/>
        <path d="M546 812l10 5-10 5z" fill="#19d4dc"/>

        <!-- view toolbar -->
        <rect x="1572" y="166" width="33" height="227" fill="#a3a8af"/>
        <rect x="1572" y="166" width="1" height="227" fill="#8c9096"/>
        <g fill="none" stroke="#4d5968">
          <circle cx="1589" cy="186" r="10" fill="url(#ball)" stroke="#5a6470"/>
          <ellipse cx="1587" cy="188" rx="12" ry="6" transform="rotate(-30 1587 188)"/>
          <circle cx="1597" cy="181" r="3.500" fill="#dfe4ea"/>
          <rect x="1576.500" y="206.500" width="24" height="23" fill="#8497ad"/>
          <path d="M1576.500 240.500h19v17h-19zM1576.500 240.500l5-5h19v17l-5 5M1595.500 240.500l5-5" fill="#cfe4fb"/>
          <path d="M1581.500 235.500v17h19M1581.500 252.500l-5 5"/>
          <path d="M1576.500 279.500h19v17h-19z" fill="#8497ad"/><path d="M1576.500 279.500l5-5h19v17l-5 5v-17M1595.500 279.500l5-5" fill="#9fb0c3"/>
          <path d="M1597 322a10 10 0 1 0 2 8" stroke-width="1.800"/>
          <rect x="1576.500" y="358.500" width="24" height="22" fill="#8497ad"/>
          <path d="M1576.500 363.500h24M1588.500 363.500v17" />
        </g>
        <path d="M1594 318l6 0-1 7z" fill="#4d5968"/>
        <path d="M1580 367h3M1580 371h3M1580 375h3M1585 367h2M1585 371h2M1585 375h2M1591 367h3M1591 371h3M1591 375h3M1596 367h2M1596 371h2M1596 375h2" stroke="#2e3a48"/>
        <path d="M1585.500 264.500h6l-3 3zM1585.500 303.500h6l-3 3zM1585.500 342.500h6l-3 3z" fill="#444"/>
        <path d="M1574 352.500h30" stroke="#7d838a"/>
        <text class="td" x="1599" y="227">2D</text>
      </svg>
    </div>

    <div class="handle"></div>

    <aside class="rightcol">
      <section class="panel drawing-panel">
        <div class="strip"><span class="x">×</span></div>
        <div class="ptitle ptitle-r">图纸管理</div>
        <div class="ptool rtb">
          <span class="tbi"><svg class="i15"><use href="#t-add"/></svg>添加图纸<span class="caret"></span></span>
          <span class="tbi"><svg class="i16"><use href="#t-sp"/></svg>分割<span class="caret"></span></span>
          <span class="tbi"><svg class="i15"><use href="#t-loc"/></svg>定位</span>
          <span class="tbi"><svg class="i15"><use href="#t-del"/></svg>删除</span>
        </div>
        <div class="dw-body">
          <div class="dw-main">
            <div class="dw-head"><div class="dh-name">名称</div><div class="dh-lock">锁定</div></div>
            <div class="grp"><span class="box minus"></span>[2号宿舍（裙楼）] 基础层 (0~1)</div>
            <div class="row focus"><div class="nm">基础平面布置图</div><div class="lk"><svg class="i-lock"><use href="#lock"/></svg></div></div>
            <div class="row last"><div class="nm">基础梁平法施工图</div><div class="lk"><svg class="i-lock"><use href="#lock"/></svg></div></div>
            <div class="grp"><span class="box minus"></span>[2号宿舍（裙楼）] 第1层 (1~5.8)</div>
            <div class="row"><div class="nm">一层~三层剪力墙、柱...</div><div class="lk"><svg class="i-lock"><use href="#lock"/></svg></div></div>
            <div class="row"><div class="nm">二层结构平面配筋图</div><div class="lk"><svg class="i-lock"><use href="#lock"/></svg></div></div>
            <div class="row"><div class="nm">二层梁平法施工图</div><div class="lk"><svg class="i-lock"><use href="#lock"/></svg></div></div>
            <div class="row last picked"><div class="nm">一层平面图</div><div class="lk"><svg class="i-lock"><use href="#lock"/></svg></div></div>
            <div class="grp"><span class="box minus"></span>[2号宿舍（裙楼）] 第2层 (5.8~9.8)</div>
            <div class="row"><div class="nm">一层~三层剪力墙、柱...</div><div class="lk"><svg class="i-lock"><use href="#lock"/></svg></div></div>
            <div class="row"><div class="nm">三层结构平面配筋图</div><div class="lk"><svg class="i-lock"><use href="#lock"/></svg></div></div>
            <div class="row"><div class="nm">三层梁平法施工图-1</div><div class="lk"><svg class="i-lock"><use href="#lock"/></svg></div></div>
            <div class="row last"><div class="nm">二层平面图</div><div class="lk"><svg class="i-lock"><use href="#lock"/></svg></div></div>
            <div class="grp"><span class="box minus"></span>[2号宿舍（裙楼）] 第3层 (9.8~12.9)</div>
            <div class="row"><div class="nm">三层平面图</div><div class="lk"><svg class="i-lock"><use href="#lock"/></svg></div></div>
            <div class="row"><div class="nm">三层梁平法施工图-1</div><div class="lk"><svg class="i-lock"><use href="#lock"/></svg></div></div>
            <div class="row last"><div class="nm">三层结构平面配筋图</div><div class="lk"><svg class="i-lock"><use href="#lock"/></svg></div></div>
            <div class="grp"><span class="box minus"></span>[2号宿舍（主楼）] 基础层 (-0.8~1)</div>
            <div class="row"><div class="nm">基础平面布置图-1</div><div class="lk"><svg class="i-lock"><use href="#lock"/></svg></div></div>
            <div class="row last"><div class="nm">基础梁平法施工图-1</div><div class="lk"><svg class="i-lock"><use href="#lock"/></svg></div></div>
            <div class="grp"><span class="box minus"></span>[2号宿舍（主楼）] 首层 (1~5.8)</div>
            <div class="row"><div class="nm">二层梁平法施工图-1</div><div class="lk"><svg class="i-lock"><use href="#lock"/></svg></div></div>
            <div class="row"><div class="nm">二层结构平面配筋图-1</div><div class="lk"><svg class="i-lock"><use href="#lock"/></svg></div></div>
            <div class="row last"><div class="nm">一层平面图-1</div><div class="lk"><svg class="i-lock"><use href="#lock"/></svg></div></div>
            <div class="grp"><span class="box minus"></span>[2号宿舍（主楼）] 第2层 (5.8~9.8)</div>
            <div class="row"><div class="nm">三层梁平法施工图</div><div class="lk"><svg class="i-lock"><use href="#lock"/></svg></div></div>
            <div class="row"><div class="nm">三层结构平面配筋图-1</div><div class="lk"><svg class="i-lock"><use href="#lock"/></svg></div></div>
            <div class="row last"><div class="nm">二层平面图-1</div><div class="lk"><svg class="i-lock"><use href="#lock"/></svg></div></div>
            <div class="grp"><span class="box minus"></span>[2号宿舍（主楼）] 第3层 (9.8~12.9)</div>
            <div class="hbar"><div class="hthumb"></div></div>
          </div>
          <div class="dw-track"><div class="dw-thumb"></div></div>
        </div>
      </section>
      <section class="panel layer-panel">
        <div class="strip"><span class="x">×</span></div>
        <div class="ptitle ptitle-r">图层管理</div>
        <div class="layer-btns"><span>显示指定图层</span><span>隐藏指定图层</span></div>
        <div class="layer-head"><i></i><i></i><i></i></div>
      </section>
    </aside>
  </main>

  <svg class="overlay" viewBox="0 0 1919 947" aria-hidden="true">
    <path d="M974 598L998 594 996 602 1054 622 994 607 992 615z" fill="#19dcdc"/>
    <path d="M648 739L345 821 343 818 323 834 347 840 345 830 418 812z" fill="#19dcdc"/>
  </svg>
</div>
</body>
</html>
```

FILE: styles.css
```css
* { box-sizing: border-box; }
html, body { margin: 0; padding: 0; background: #fff; }
body { font: 12px/1.2 "Noto Sans CJK SC", "Noto Sans", sans-serif; color: #2a2a2a; overflow: hidden; text-spacing-trim: space-all; font-kerning: none; font-feature-settings: "palt" 0, "halt" 0, "chws" 0; }
.defs { position: absolute; width: 0; height: 0; }
.app { position: relative; width: 1919px; height: 947px; overflow: hidden; display: flex; flex-direction: column; }
.overlay { position: absolute; left: 0; top: 0; width: 1919px; height: 947px; pointer-events: none; }
svg { display: block; flex: none; overflow: hidden; }
.i12 { width: 12px; height: 12px; }
.i14 { width: 14px; height: 14px; }
.i15 { width: 15px; height: 15px; }
.i16 { width: 16px; height: 16px; }
.i18 { width: 18px; height: 16px; }
.i30 { width: 30px; height: 30px; }

.caret { display: inline-block; width: 0; height: 0; border: 3px solid transparent; border-top: 3.5px solid #555; border-bottom: 0; flex: none; }
.caret-off { border-top-color: #c0c0c0; }

/* header */
.head { display: flex; height: 41px; flex: none; }
.logo-cell { width: 50px; height: 41px; position: relative; padding: 8px 0 0 9px; }
.logo { width: 30px; height: 29px; }
.logo-corner { position: absolute; left: 36px; top: 35px; border: 2px solid transparent; border-right-color: #888; border-bottom-color: #888; }
.head-main { flex: 1; display: flex; flex-direction: column; min-width: 0; }
.titlebar { height: 22px; display: flex; align-items: center; position: relative; }
.qat { display: grid; grid-template-columns: 23px 23px 21px 21px 12px 20px 15px 20px 23px 24px 24px 21px 26px 21px; align-items: center; padding-left: 5px; flex: none; }
.sigma { color: #3d84c6; font: bold 17px/16px "Liberation Sans", sans-serif; }
.doc-title { flex: 1; white-space: nowrap; overflow: hidden; color: #222; font-size: 12px; line-height: 22px; min-width: 0; letter-spacing: .17px; }
.winbtns { display: flex; flex: none; align-items: center; background: #fff; }
.wb { width: 14px; height: 14px; margin-right: 22px; }
.wb-last { margin-right: 11px; }
.tabsbar { height: 19px; display: flex; align-items: flex-start; }
.tabs { display: flex; flex: none; }
.tab { padding: 0 13px; height: 19px; line-height: 19px; color: #333; }
.tab-on { background: #5ba8f5; color: #fff; }
.tools-right { margin-left: auto; display: flex; align-items: center; height: 16px; }
.search { width: 244px; height: 16px; border: 1px solid #c4c4c4; display: flex; align-items: center; justify-content: space-between; padding: 0 5px 0 1px; color: #c4c4c4; line-height: 14px; }
.avatar { width: 17px; height: 16px; margin-left: 10px; }
.user { margin-left: 3px; width: 20px; font-size: 13px; color: #222; }
.ic-chat { width: 15px; height: 15px; margin-left: 8px; }
.ic-head { width: 14px; height: 16px; margin-left: 8px; }
.help { margin-left: 6px; font: 16px/16px "Liberation Sans", sans-serif; color: #9a9a9a; }
.help + .caret { margin-left: 3px; }
.ic-shirt { width: 14px; height: 15px; margin-left: 8px; }
.ic-up { width: 14px; height: 14px; margin: 0 6px 0 8px; }

/* ribbon */
.ribbon { height: 97px; flex: none; display: flex; border-top: 1px solid #dcdcdc; background: linear-gradient(#fff 0, #fff 45%, #eceef0 100%); }
.rg { display: flex; flex-direction: column; border-right: 1px solid #d8d8d8; height: 94px; }
.rg-body { height: 72px; display: flex; padding-top: 1px; }
.rg-label { height: 22px; display: flex; align-items: center; justify-content: center; gap: 6px; font-size: 12px; color: #333; }
.rg-sel { width: 146px; }
.rg-cad { width: 194px; }
.rg-gen { width: 275px; }
.rg-mod { width: 237px; }
.rg-draw { width: 120px; }
.rg-smart { width: 138px; }
.rg-sel .rg-body { padding-left: 8px; }
.rg-cad .rg-body { padding-left: 9px; }
.rg-gen .rg-body { padding-left: 9px; }
.rg-mod .rg-body { padding-left: 10px; }
.rg-draw .rg-body { padding-left: 7px; }
.bigsel { width: 40px; height: 67px; margin: 3px 7px 0 0; background: #c8d8ec; display: flex; flex-direction: column; align-items: center; padding-top: 2px; }
.bigsel-i { width: 29px; height: 29px; }
.bigsel span { margin-top: 5px; font-size: 12px; }
.rcol { display: grid; grid-auto-rows: 23.5px; }
.col80 { width: 80px; }
.col66 { width: 66px; }
.col112 { width: 112px; }
.col54 { width: 54px; }
.ri { display: flex; align-items: center; gap: 3px; white-space: nowrap; color: #2a2a2a; }
.ri .caret { margin-left: 5px; }
.ri.off, .bigbtn.off { color: #b4b4b4; }
.bigbtn { width: 40px; margin-right: 2px; display: flex; flex-direction: column; align-items: center; padding-top: 6px; }
.bigbtn span:not(.caret) { margin-top: 4px; line-height: 16px; font-size: 12px; white-space: nowrap; }
.bigbtn-wide { width: 62px; margin: 0; padding-top: 6px; }
.bigbtn-wide .caret { margin-top: 6px; }
.rg-draw .rcol { margin-left: 3px; }

/* selectors */
.selbar { height: 28px; flex: none; display: flex; gap: 1px; padding: 4px 0 0 2px; background: #c9cbcf; border-top: 1px solid #9a9da1; }
.sel { width: 99px; height: 21px; background: #fff; display: flex; align-items: center; justify-content: space-between; padding: 0 5px; white-space: nowrap; overflow: hidden; font-size: 12px; }

/* work */
.work { flex: 1; display: flex; min-height: 0; border-top: 1px solid #8f9398; }
.panel { border: 1px solid #b4b6ba; border-top: 0; display: flex; flex-direction: column; background: #fff; }
.strip { height: 11px; background: #d4d6db; flex: none; display: flex; justify-content: flex-end; align-items: center; padding-right: 5px; }
.x { color: #666; font: bold 10px/10px "Liberation Sans", sans-serif; }
.ptitle { height: 21px; flex: none; background: #eeeeee; color: #8b8b8b; padding-left: 8px; line-height: 20px; border-bottom: 1px solid #c6c8cc; }
.ptool { height: 28px; flex: none; border-bottom: 1px solid #c6c8cc; background: #fbfbfb; display: flex; align-items: center; }

/* nav */
.nav { width: 138px; flex: none; }
.nav-tool { padding-left: 7px; }
.i-spark { width: 13px; height: 11px; margin-right: 63px; }
.toggle { width: 24px; height: 22px; border: 1px solid #7fbaf2; border-radius: 4px; background: #e9f3fd; display: flex; align-items: center; justify-content: center; margin-right: 4px; }
.nav-body { flex: 1; display: flex; min-height: 0; }
.tree { width: 122px; overflow: hidden; padding-top: 3px; }
.tg, .ti { height: 24px; display: flex; align-items: center; white-space: nowrap; }
.tg { padding-left: 2px; }
.i-f { width: 16px; height: 14px; margin-right: 5px; }
.ti { padding-left: 43px; }
.ti svg { margin-right: 6px; }
.ti-on { background: linear-gradient(#b7d0ee, #b7d0ee) 40px 2px / 82px 21px no-repeat; }
.vip { margin-left: 5px; width: 30px; height: 10px; background: #fbdc6a; color: #c8a430; font: bold 7px/10px "Liberation Serif", serif; text-align: center; }
.vtrack { width: 14px; padding: 75px 0 0 3px; }
.vthumb { width: 8px; height: 447px; border-radius: 4px; background: #c8c8c8; }

/* mid */
.mid { width: 276px; margin-left: 4px; flex: none; display: flex; flex-direction: column; gap: 4px; }
.list-panel { height: 521px; flex: none; }
.tb { gap: 9px; padding-left: 6px; }
.tbi { display: flex; align-items: center; gap: 4px; white-space: nowrap; color: #333; }
.tbi .caret { margin-left: 2px; }
.more { margin-left: auto; margin-right: 4px; font: 7px/10px "DejaVu Sans", sans-serif; color: #333; letter-spacing: -1px; }
.csearch { height: 19px; flex: none; border-bottom: 1px solid #c6c8cc; display: flex; align-items: center; justify-content: space-between; padding: 0 7px 0 2px; color: #a0a0a0; }
.clist { flex: 1; padding: 6px 0 0 10px; }
.cgroup { height: 20px; display: flex; align-items: center; }
.tri { width: 0; height: 0; border-style: solid; border-width: 0 0 5px 5px; border-color: transparent transparent #444 transparent; margin-right: 8px; }
.citem { margin: 2px 0 0 30px; width: 67px; height: 21px; background: #b7d0ee; line-height: 21px; padding-left: 3px; white-space: nowrap; }
.prop-panel { flex: 1; min-height: 0; overflow: hidden; }
.ptable { border-collapse: collapse; table-layout: fixed; width: 271px; flex: none; }
.c-n { width: 21px; }
.c-k { width: 101px; }
.c-v { width: 149px; }
.ptable th, .ptable td { height: 21px; padding: 1px 0 0 3px; border: 1px solid #d0d0d0; border-top: 0; font-weight: 400; white-space: nowrap; overflow: hidden; position: relative; line-height: 18px; }
.ptable th { border-bottom: 1px solid #c6c8cc; text-align: center; padding: 1px 0 0; background: #fff; }
.ptable tr > :first-child { border-left: 0; text-align: center; padding: 1px 0 0; background: #f3f3f3; }
.n { color: #444; font-size: 12px; }
.blue { color: #2b5ae8; }
.gray { color: #a8a8a8; background: #efefef; }
.shade { background: #efefef; }
.tg-cell { padding-left: 3px !important; }
.box { display: inline-block; width: 13px; height: 13px; border: 1px solid #8a8a8a; border-radius: 2px; background: #fff; position: relative; vertical-align: -2px; margin-right: 6px; flex: none; }
.box::before { content: ""; position: absolute; left: 2px; right: 2px; top: 5px; height: 1px; background: #555; }
.plus::after { content: ""; position: absolute; top: 2px; bottom: 2px; left: 5px; width: 1px; background: #555; }
.sub { padding-left: 32px !important; background: linear-gradient(#ddd, #ddd) 8px 0 / 1px 100% no-repeat, linear-gradient(#ddd, #ddd) 8px 50% / 16px 1px no-repeat; }
.sub-last { background: linear-gradient(#ddd, #ddd) 8px 0 / 1px 50% no-repeat, linear-gradient(#ddd, #ddd) 8px 50% / 16px 1px no-repeat; }

.handle { width: 4px; flex: none; background: linear-gradient(#555b63, #555b63) 0 371px / 4px 100px no-repeat; }

/* canvas */
.canvas { width: 1183px; flex: none; background: #000; }
.cad { width: 1183px; height: 780px; }
.ax, .axs, .dim, .cd, .td { font-family: "Liberation Sans", sans-serif; }
.ax { fill: #fff; font-size: 18px; text-anchor: middle; }
.axs { fill: #fff; font-size: 17px; }
.dim { fill: #f0f0f0; font-size: 18px; text-anchor: middle; }
.cd { fill: #008080; font-size: 14px; text-anchor: middle; }
.cd-s { font-size: 12px; }
.td { fill: #1d2a38; font-size: 10px; text-anchor: end; }

/* right */
.rightcol { flex: 1; min-width: 0; display: flex; flex-direction: column; gap: 5px; }
.drawing-panel { height: 711px; flex: none; border-right: 0; }
.ptitle-r { padding-left: 8px; }
.rtb { gap: 8px; padding-left: 7px; }
.rtb .tbi { gap: 3px; }
.rtb .caret { margin-left: 5px; }
.rtb .tbi:nth-child(2) { margin-right: -4px; }
.rtb .tbi:nth-child(3) { margin-right: 2px; }
.dw-body { flex: 1; display: flex; min-height: 0; }
.dw-main { width: 295px; flex: none; display: flex; flex-direction: column; }
.dw-head { display: flex; height: 25px; flex: none; }
.dh-name { width: 168px; background: #7ab7f5; color: #fff; font-weight: 700; text-align: center; line-height: 25px; border: 1px solid #5e9fe6; }
.dh-lock { flex: 1; text-align: center; line-height: 25px; color: #444; background: #fbfbfb; border-bottom: 1px solid #d5d5d5; }
.grp, .row { height: 21px; flex: none; display: flex; align-items: center; border-bottom: 1px solid #d5d5d5; white-space: nowrap; }
.grp { padding: 2px 0 0 2px; color: #333; }
.grp .box { vertical-align: 0; margin-top: -2px; }
.row { background: linear-gradient(#ddd, #ddd) 8px 0 / 1px 100% no-repeat, linear-gradient(#ddd, #ddd) 8px 50% / 17px 1px no-repeat; }
.row.last { background: linear-gradient(#ddd, #ddd) 8px 0 / 1px 50% no-repeat, linear-gradient(#ddd, #ddd) 8px 50% / 17px 1px no-repeat; }
.row.picked { background-color: #d3e8fb; }
.nm { width: 168px; height: 100%; line-height: 22px; padding-left: 31px; border-right: 1px solid #d5d5d5; color: #222; }
.lk { flex: 1; display: flex; justify-content: center; padding-left: 8px; }
.i-lock { width: 12px; height: 14px; margin-left: 0; }
.focus .nm { border: 2px solid #808080; padding-left: 29px; line-height: 19px; height: 22px; margin-top: -1px; }
.hbar { height: 16px; flex: none; padding: 5px 0 0 14px; }
.hthumb { width: 178px; height: 8px; border-radius: 4px; background: #c8c8c8; }
.dw-track { width: 14px; padding: 14px 0 0 3px; }
.dw-thumb { width: 8px; height: 171px; border-radius: 4px; background: #c8c8c8; }
.layer-panel { flex: 1; min-height: 0; border-right: 0; }
.layer-btns { height: 28px; flex: none; display: flex; gap: 9px; padding-left: 5px; align-items: center; color: #5a5a5a; border-bottom: 1px solid #c6c8cc; }
.layer-head { flex: 1; display: grid; grid-template-columns: 51px 36px 150px 1fr; }
.layer-head i { border-right: 1px solid #c6c8cc; }
```
